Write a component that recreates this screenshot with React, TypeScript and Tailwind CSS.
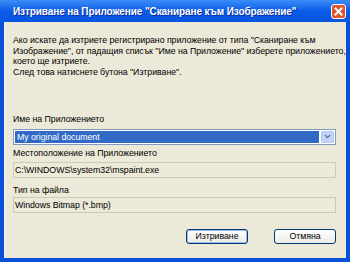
import { ChevronDown } from "lucide-react";

export default function App() {
  return (
    <div className="w-[350px] h-[262px] flex flex-col bg-[#0A4FD8] overflow-hidden font-['Liberation_Sans',Arial,sans-serif] text-black">
      {/* Title bar */}
      <div className="h-[22px] shrink-0 flex items-center pl-[13px] pr-[4px] bg-gradient-to-b from-[#3B8DF7] via-[#0A5BE8] to-[#0A55E0]">
        <span className="flex-1 min-w-0 text-white font-bold text-[10px] tracking-[-0.1px] whitespace-nowrap [text-shadow:1px_1px_0_#0A2FA0]">
          Изтриване на Приложение "Сканиране към Изображение"
        </span>
        <span className="shrink-0 block w-[15px] h-[15px] rounded-[3px] border border-[#FFFFFF] bg-[#E0552E]">
          <svg width="13" height="13" viewBox="0 0 13 13" className="block">
            <path d="M3.5 3.5 L9.5 9.5 M9.5 3.5 L3.5 9.5" stroke="#FFFFFF" strokeWidth="2" strokeLinecap="square" />
          </svg>
        </span>
      </div>

      {/* Body */}
      <div className="flex-1 mx-[4px] mb-[4px] bg-[#ECE9D8] border-l border-[#F5F3EA] pl-[8px] pr-[10px] pt-[13px] text-[8.8px] tracking-[-0.05px] whitespace-nowrap">
        <p className="leading-[10.7px]">
          Ако искате да изтриете регистрирано приложение от типа "Сканиране към
          <br />
          Изображение", от падащия списък "Име на Приложение" изберете приложението,
          <br />
          което ще изтриете.
          <br />
          След това натиснете бутона "Изтриване".
        </p>

        <div className="mt-[35px] leading-[12px]">Име на Приложението</div>
        <div className="mt-[4px] h-[16px] flex border border-[#7F9DB9] bg-white p-[1px]">
          <div className="flex-1 bg-[#316AC5] text-white leading-[12px] pl-[2px]">My original document</div>
          <div className="w-[13px] ml-[2px] rounded-[2px] bg-[#C1D3FB] border border-[#B5C8F3] flex items-center justify-center">
            <ChevronDown className="w-[9px] h-[9px] text-[#4D6185]" strokeWidth={3} />
          </div>
        </div>

        <div className="mt-[2px] leading-[12px]">Местоположение на Приложението</div>
        <div className="mt-[3px] h-[16px] border border-[#CDCAB6] leading-[14px] pl-[1px]">
          C:\WINDOWS\system32\mspaint.exe
        </div>

        <div className="mt-[6px] leading-[12px]">Тип на файла</div>
        <div className="mt-[1px] h-[16px] border border-[#CDCAB6] leading-[14px] pl-[1px]">
          Windows Bitmap (*.bmp)
        </div>

        <div className="mt-[16px] flex justify-end gap-[26px]">
          <button className="w-[62px] h-[15px] rounded-[3px] border border-[#003C74] bg-gradient-to-b from-[#FFFFFF] to-[#ECEBE6] shadow-[inset_0_0_0_1px_#9DB9EB] text-[8.8px] leading-[12px]">
            Изтриване
          </button>
          <button className="w-[62px] h-[15px] rounded-[3px] border border-[#003C74] bg-gradient-to-b from-[#FFFFFF] to-[#ECEBE6] text-[8.8px] leading-[12px]">
            Отмяна
          </button>
        </div>
      </div>
    </div>
  );
}
